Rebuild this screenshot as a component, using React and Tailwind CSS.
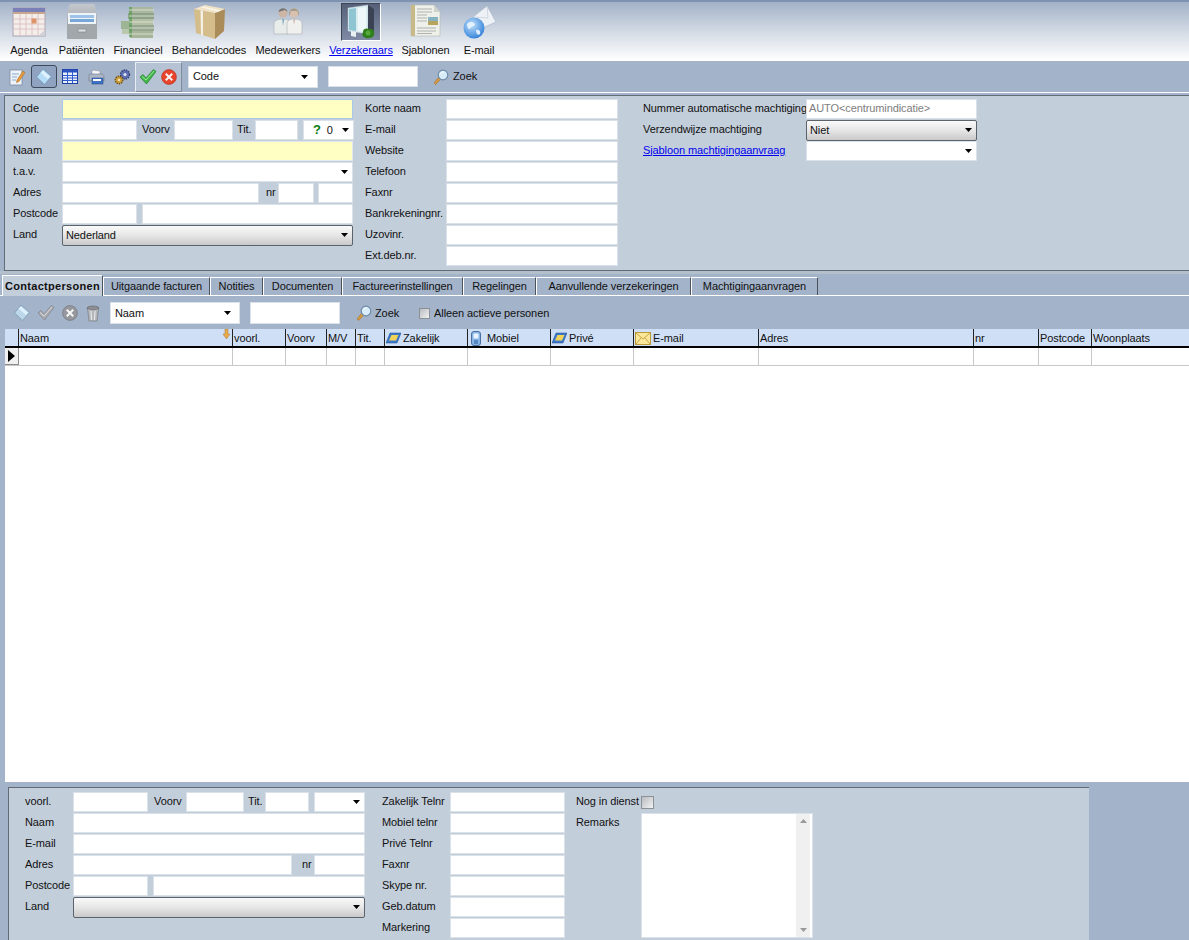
import React from "react";

const Arrow = ({ className = "" }) => (
  <svg width="7" height="4" viewBox="0 0 7 4" className={className}><path d="M0 0H7L3.5 4Z" fill="#000" /></svg>
);

const Label = ({ w, children, className = "" }) => (
  <span className={`shrink-0 whitespace-nowrap pb-[2px] ${w} ${className}`}>{children}</span>
);

const Input = ({ w, children, yellow, focus }) => (
  <div className={`h-[20px] shrink-0 border flex items-center px-[2px] pb-[1px] whitespace-nowrap overflow-hidden ${w} ${yellow ? "bg-[#ffffc4]" : "bg-white"} ${focus ? "border-[#a9c8ec]" : yellow ? "border-[#e3e8ee]" : "border-[#dbe1e8]"}`}>{children}</div>
);

const Combo = ({ w, children }) => (
  <div className={`h-[20px] shrink-0 border border-[#dbe1e8] bg-white flex items-center justify-between pl-[3px] pr-[4px] ${w}`}>
    <span className="flex items-center">{children}</span>
    <Arrow />
  </div>
);

const Drop = ({ w, children }) => (
  <div className={`h-[21px] shrink-0 rounded-[2px] border border-[#5d636b] bg-gradient-to-b from-[#fafafa] via-[#e6e6e6] to-[#c9c9c9] flex items-center justify-between pl-[3px] pr-[4px] ${w}`}>
    <span>{children}</span>
    <Arrow />
  </div>
);

const Row = ({ children }) => <div className="flex items-center h-[20px]">{children}</div>;

/* ---------- large navigation icons ---------- */
const IconAgenda = () => (
  <svg width="36" height="36" viewBox="0 0 36 36">
    <rect x="2" y="4" width="32" height="28" fill="#f4eeea" stroke="#aaa3b0" />
    <rect x="2" y="4" width="32" height="4" fill="#7c80b8" />
    <rect x="2" y="8" width="32" height="2" fill="#c8a78f" />
    <path d="M2 15H34M2 20H34M2 25H34M9 10V32M15 10V32M21 10V32M27 10V32" stroke="#d9b8bc" strokeWidth="0.8" />
    <rect x="20.5" y="14.5" width="5" height="5" fill="#dd9468" />
    <path d="M27 32L34 26V32Z" fill="#cfcfd6" />
  </svg>
);
const IconPatient = () => (
  <svg width="36" height="36" viewBox="0 0 36 36">
    <defs><linearGradient id="cab" x1="0" y1="0" x2="0" y2="1"><stop offset="0" stopColor="#c4c8cd" /><stop offset="1" stopColor="#8f9499" /></linearGradient></defs>
    <path d="M5 2Q5 0 8 0H28Q31 0 31 2L33 11V34Q33 35 31 35H5Q3 35 3 34V11Z" fill="url(#cab)" />
    <rect x="4" y="9" width="28" height="11" fill="#eef3f7" />
    <rect x="6" y="11" width="24" height="3" fill="#9fc3e8" />
    <rect x="6" y="15" width="24" height="3" fill="#78a6d6" />
    <rect x="3" y="20" width="30" height="15" rx="1" fill="#a2a7ac" />
    <rect x="14" y="25" width="8" height="3" fill="#d8dbde" stroke="#75797d" strokeWidth="0.5" />
  </svg>
);
const IconMoney = () => (
  <svg width="36" height="36" viewBox="0 0 36 36">
    <rect x="1" y="17" width="16" height="8" fill="#9db595" />
    <rect x="2" y="25" width="17" height="5" fill="#b9c7ad" />
    <rect x="9" y="3" width="24" height="6" fill="#aab79f" />
    <rect x="8" y="9" width="26" height="6" fill="#8fa38a" />
    <rect x="10" y="15" width="23" height="6" fill="#b4bfa6" />
    <rect x="9" y="21" width="25" height="6" fill="#95a78f" />
    <rect x="10" y="27" width="23" height="7" fill="#a8b59b" />
    <path d="M9 3H12V33H9Z" fill="#5d9a58" opacity=".7" />
    <path d="M9 6H34M9 12H34M9 18H34M9 24H34M9 30H34" stroke="#e4e8dc" strokeWidth="0.8" />
  </svg>
);
const IconBox = () => (
  <svg width="36" height="36" viewBox="0 0 36 36">
    <path d="M3 5L24 9V35L5 29Z" fill="#d5bd8b" />
    <path d="M24 9L34 5L33 27L24 35Z" fill="#a98c5a" />
    <path d="M3 5L14 1L34 5L24 9Z" fill="#f1e3c4" />
    <path d="M9 3L12 2.5L30 6.5L27 7.8Z" fill="#f8f5ec" />
    <path d="M9.5 6.2L12 6.7V31.5L10 30.9Z" fill="#f4f0e6" />
  </svg>
);
const IconDoctors = () => (
  <svg width="36" height="36" viewBox="0 0 36 36">
    <circle cx="13" cy="9" r="4.5" fill="#cdb6a6" />
    <path d="M8.5 8C9 3 17 3 17.5 8L15 6Z" fill="#777" />
    <path d="M4 30V20C4 16 9 15 13 15C17 15 19 16 19 20V30Z" fill="#e8eceb" stroke="#a9aeae" strokeWidth=".6" />
    <path d="M12 15L13 22L14.5 15Z" fill="#8fb1c4" />
    <circle cx="24" cy="9" r="4.5" fill="#d8c1ae" />
    <path d="M19 12C18 2 30 2 29 12L27 7H21Z" fill="#a79a84" />
    <path d="M17 30V20C17 16 21 15 24 15C28 15 32 16 32 20V30Z" fill="#f0f1ef" stroke="#a9aeae" strokeWidth=".6" />
    <path d="M23 15L24 21L25.5 15Z" fill="#d0bcb0" />
  </svg>
);
const IconInsurer = () => (
  <svg width="30" height="36" viewBox="0 0 30 36">
    <path d="M2 4L22 1V30L2 27Z" fill="#d9ecf0" stroke="#b8c6d0" strokeWidth=".5" />
    <path d="M3 5L10 4V27L3 26Z" fill="#8fc4d2" />
    <path d="M12 4L20 3V28L12 27Z" fill="#eef7f9" />
    <path d="M22 1L28 5V27L22 30Z" fill="#3a4254" />
    <path d="M5 27L5 32L10 33V28Z" fill="#eaf1f3" />
    <path d="M17 28C17 24 21 24 23 25C27 24 29 28 28 31C27 35 20 35 18 33C16 32 16 30 17 28Z" fill="#2f7f1c" />
    <circle cx="22" cy="29" r="2.5" fill="#58a93b" />
  </svg>
);
const IconPaper = () => (
  <svg width="36" height="36" viewBox="0 0 36 36">
    <path d="M3 1H26L32 8V32H3Z" fill="#eef0ea" stroke="#b7bbb4" strokeWidth=".6" />
    <rect x="3" y="1" width="4" height="31" fill="#c7ba88" />
    <path d="M9 5H24M9 8H24M9 11H19M9 14H19M9 17H19M9 24H28M9 27H28M9 29.5H24" stroke="#a8aca8" strokeWidth=".9" />
    <rect x="20" y="13" width="10" height="8" fill="#87b3c0" />
    <rect x="20" y="17" width="10" height="4" fill="#b8a55d" />
    <path d="M26 1V8H32Z" fill="#cfd2cc" />
  </svg>
);
const IconMail = () => (
  <svg width="36" height="36" viewBox="0 0 36 36">
    <defs><radialGradient id="glb" cx=".4" cy=".35" r=".7"><stop offset="0" stopColor="#bfe0fb" /><stop offset="1" stopColor="#2f7fd8" /></radialGradient></defs>
    <path d="M12 13L26 2L35 18L19 25Z" fill="#eef2f7" stroke="#a8b3c2" strokeWidth=".6" />
    <path d="M12 13L27 14L26 2" fill="none" stroke="#c3ccd8" strokeWidth=".7" />
    <circle cx="13" cy="24" r="10.5" fill="url(#glb)" />
    <path d="M6 20C9 17 12 18 14 20C13 23 10 22 9 25C7 25 6 23 6 20ZM15 26C18 25 20 27 19 30C17 32 15 30 15 26Z" fill="#eaf5ff" opacity=".9" />
  </svg>
);

/* ---------- small icons ---------- */
const Diamond = ({ gray }) => (
  <svg width="18" height="18" viewBox="0 0 18 18">
    <path d="M8 1L16.5 8.5L9.5 16.5L1.5 9Z" fill={gray ? "#bcd6ea" : "#b7dcf7"} stroke={gray ? "#7c9ab2" : "#6d95b8"} strokeWidth=".8" />
    <path d="M8 2.5L15 8.5L13 11L5.5 4.5Z" fill="#dff1fd" />
  </svg>
);
const Check = ({ gray }) => (
  <svg width="18" height="18" viewBox="0 0 18 18">
    <path d="M1 9L4 6.5L7 10L14.5 1.5L17 3.5L7.5 16Z" fill={gray ? "#a9abb0" : "#43b649"} stroke={gray ? "#808389" : "#1d7f2a"} strokeWidth=".7" />
    <path d="M3 8.5L7 12L15 3" stroke={gray ? "#dadbdd" : "#9be89b"} strokeWidth="1" fill="none" />
  </svg>
);
const Cancel = ({ gray }) => (
  <svg width="16" height="16" viewBox="0 0 16 16">
    <circle cx="8" cy="8" r="7.4" fill={gray ? "#96989d" : "#e8452c"} stroke={gray ? "#6f7177" : "#b32c1a"} strokeWidth=".6" />
    <path d="M4.8 4.8L11.2 11.2M11.2 4.8L4.8 11.2" stroke="#f6f6f6" strokeWidth="2" />
  </svg>
);
const Magnifier = () => (
  <svg width="16" height="16" viewBox="0 0 16 16">
    <path d="M1 14L2.5 15.5L7.5 10.5L5.5 8.5Z" fill="#d89a3c" stroke="#96672a" strokeWidth=".5" />
    <circle cx="10" cy="6" r="4.8" fill="#d8ecfa" stroke="#6d8aa8" strokeWidth="1.2" />
    <path d="M7.5 5C8 3.8 9 3 10.5 3" stroke="#fff" strokeWidth="1" fill="none" />
  </svg>
);
const Note = () => (
  <svg width="18" height="18" viewBox="0 0 18 18">
    <rect x="2" y="2" width="12" height="15" fill="#eef3f8" stroke="#7b8da3" strokeWidth=".8" />
    <path d="M4 6H11M4 9H9M4 12H8" stroke="#7aa0c8" strokeWidth=".9" />
    <path d="M9 12L15 3L17 4.5L11 13.5L8.5 14.5Z" fill="#e79c3c" stroke="#9b5f1d" strokeWidth=".5" />
  </svg>
);
const TableIcon = () => (
  <svg width="16" height="15" viewBox="0 0 16 15">
    <rect x=".5" y=".5" width="15" height="14" fill="#e9f0fb" stroke="#1f3f9e" />
    <rect x=".5" y=".5" width="15" height="3" fill="#2a52c0" />
    <path d="M1 6.5H15M1 9H15M1 11.5H15M5.5 3V14M10.5 3V14" stroke="#2e5bd0" />
  </svg>
);
const Printer = () => (
  <svg width="17" height="16" viewBox="0 0 17 16">
    <path d="M4 1L12 2V6H4Z" fill="#f5f5f8" stroke="#8b93a3" strokeWidth=".6" />
    <path d="M1 6C1 5 3 5 4 5H13C15 5 16 6 16 8V12H1Z" fill="#aeb7c7" stroke="#6f7888" strokeWidth=".6" />
    <rect x="4" y="9" width="11" height="6" fill="#3f72c4" stroke="#23447e" strokeWidth=".5" />
    <rect x="5" y="10" width="8" height="2" fill="#fff" />
  </svg>
);
const Gears = () => (
  <svg width="18" height="18" viewBox="0 0 18 18">
    <circle cx="12" cy="6.5" r="4.5" fill="#5d6fb0" stroke="#333f78" strokeDasharray="1.4 1" strokeWidth="1.4" />
    <circle cx="12" cy="6.5" r="1.6" fill="#dfe4f2" />
    <circle cx="6" cy="12" r="3.8" fill="#c79a3a" stroke="#6d5015" strokeDasharray="1.3 1" strokeWidth="1.4" />
    <circle cx="6" cy="12" r="1.3" fill="#f3e3b5" />
  </svg>
);
const Trash = () => (
  <svg width="14" height="17" viewBox="0 0 14 17">
    <ellipse cx="7" cy="3" rx="6" ry="2" fill="#8d8f93" stroke="#55575b" strokeWidth=".5" />
    <path d="M1.5 3.5L3 16H11L12.5 3.5C10 5 4 5 1.5 3.5Z" fill="#b4b6ba" stroke="#66686c" strokeWidth=".5" />
    <path d="M5 6L5.5 15M9 6L8.5 15" stroke="#f0f0f0" strokeWidth="1" />
  </svg>
);
const PhoneBook = () => (
  <svg width="15" height="12" viewBox="0 0 15 12">
    <path d="M4 1H15L11 11H0Z" fill="#3b78c8" stroke="#1d4a8c" strokeWidth=".5" />
    <path d="M5.5 3H12.5L10 8.5H3Z" fill="#f2d35a" />
  </svg>
);
const Mobile = () => (
  <svg width="10" height="15" viewBox="0 0 10 15" className="ml-[2px] mr-[4px]">
    <rect x=".5" y=".5" width="9" height="14" rx="2.5" fill="#87b5e6" stroke="#4d6f9e" />
    <rect x="2.5" y="2.5" width="5" height="5" fill="#e8f3ff" />
    <path d="M3 10H7M3 12H7" stroke="#2c5d9c" />
  </svg>
);
const Envelope = () => (
  <svg width="16" height="13" viewBox="0 0 16 13">
    <rect x=".5" y=".5" width="15" height="12" fill="#fbe79a" stroke="#b99a3b" />
    <path d="M1 1L8 7L15 1M1 12L6 6M15 12L10 6" stroke="#c9a543" fill="none" />
  </svg>
);
const SortDown = () => (
  <svg width="7" height="10" viewBox="0 0 7 10">
    <path d="M2 0H5V5H7L3.5 10L0 5H2Z" fill="#e9a94b" stroke="#a87a2c" strokeWidth=".5" />
  </svg>
);

const NavItem = ({ w, label, icon, active }) => (
  <div className={`flex flex-col items-center shrink-0 ${w}`}>
    <div className={`h-[38px] flex items-center justify-center mt-[3px] ${active ? "w-[40px] bg-gradient-to-b from-[#566179] to-[#7f8aa4] border border-[#3d4553] border-b-white border-r-white" : ""}`}>{icon}</div>
    <span className={`mt-[2px] leading-[14px] whitespace-nowrap ${active ? "text-[#0000ee] underline" : ""}`}>{label}</span>
  </div>
);

const Tab = ({ w, children, active }) => (
  <div className={`flex items-center justify-center shrink-0 border-l border-t border-r whitespace-nowrap border-l-white border-t-white border-r-[#4c525c] ${active ? "h-[21px] font-bold tracking-[0.3px] bg-[#c3cedb] -mb-[1px] relative" : "h-[18px] bg-[#a3b3c9]"} ${w}`}>{children}</div>
);

const Cell = ({ w, children, className = "" }) => (
  <div className={`shrink-0 h-full flex items-center pl-[1px] pt-[1px] gap-[2px] overflow-hidden whitespace-nowrap ${w} ${className}`}>{children}</div>
);

const columns = [
  ["w-[214px]", "Naam"],
  ["w-[53px]", "voorl."],
  ["w-[41px]", "Voorv"],
  ["w-[29px]", "M/V"],
  ["w-[29px]", "Tit."],
  ["w-[83px]", "Zakelijk", <PhoneBook key="a" />],
  ["w-[83px]", "Mobiel", <Mobile key="b" />],
  ["w-[83px]", "Privé", <PhoneBook key="c" />],
  ["w-[125px]", "E-mail", <Envelope key="d" />],
  ["w-[215px]", "Adres"],
  ["w-[65px]", "nr"],
  ["w-[53px]", "Postcode"],
  ["w-[97px]", "Woonplaats"],
];

export default function App() {
  return (
    <div className="w-[1189px] h-[940px] overflow-hidden flex flex-col bg-[#a3b3c9] text-[11px] tracking-[-0.1px] text-[#111] font-['Liberation_Sans',Arial,sans-serif]">
      {/* Navigation */}
      <div className="h-[61px] shrink-0 flex pl-[4px] border-t-2 border-[#7d93b0] bg-gradient-to-b from-[#a3b2c8] via-[#dce2ea] via-60% to-white">
        <div className="flex -mt-[2px]">
          <NavItem w="w-[50px]" label="Agenda" icon={<IconAgenda />} />
          <NavItem w="w-[55px]" label="Patiënten" icon={<IconPatient />} />
          <NavItem w="w-[58px]" label="Financieel" icon={<IconMoney />} />
          <NavItem w="w-[84px]" label="Behandelcodes" icon={<IconBox />} />
          <NavItem w="w-[74px]" label="Medewerkers" icon={<IconDoctors />} />
          <NavItem w="w-[72px]" label="Verzekeraars" icon={<IconInsurer />} active />
          <NavItem w="w-[57px]" label="Sjablonen" icon={<IconPaper />} />
          <NavItem w="w-[50px]" label="E-mail" icon={<IconMail />} />
        </div>
      </div>

      {/* Toolbar */}
      <div className="h-[32px] shrink-0 flex items-center pl-[8px] bg-[#a3b3c9] border-b border-white">
        <div className="w-[18px] flex justify-center"><Note /></div>
        <div className="ml-[5px] w-[26px] h-[23px] flex items-center justify-center rounded-[3px] border border-[#3e4a5c] bg-[#8fa3c0]"><Diamond /></div>
        <div className="ml-[5px] w-[16px] flex justify-center"><TableIcon /></div>
        <div className="ml-[10px] w-[17px] flex justify-center"><Printer /></div>
        <div className="ml-[8px] w-[18px] flex justify-center"><Gears /></div>
        <div className="ml-[4px] w-[47px] h-[30px] flex items-center gap-[4px] pl-[3px] bg-[#b6c3d4] border border-[#e8edf3] border-r-[#7f8b9b] border-b-[#7f8b9b]">
          <Check /><Cancel />
        </div>
        <div className="ml-[6px] w-[130px] h-[22px] bg-white border border-[#dbe1e8] flex items-center justify-between pl-[4px] pr-[9px]">
          <span>Code</span><Arrow />
        </div>
        <div className="ml-[10px] w-[90px] h-[21px] bg-white border border-[#dbe1e8]" />
        <div className="ml-[15px] flex items-center gap-[4px]"><Magnifier /><span>Zoek</span></div>
      </div>

      {/* Upper form */}
      <div className="h-[176px] shrink-0 mt-[2px] ml-[4px] border-t border-l border-b border-[#636b76] bg-[#c3cedb] flex pt-[3px] pl-[8px]">
        <div className="flex flex-col gap-[1px] w-[340px] shrink-0">
          <Row><Label w="w-[49px]">Code</Label><Input w="w-[291px]" yellow focus /></Row>
          <Row>
            <Label w="w-[49px]">voorl.</Label><Input w="w-[75px]" />
            <Label w="w-[32px] ml-[5px]">Voorv</Label><Input w="w-[59px]" />
            <Label w="w-[18px] ml-[4px]">Tit.</Label><Input w="w-[43px]" />
            <div className="ml-[5px]">
              <Combo w="w-[51px]"><span className="ml-[6px] font-bold text-[13px] text-[#0a7a0a]">?</span><span className="ml-[6px]">0</span></Combo>
            </div>
          </Row>
          <Row><Label w="w-[49px]">Naam</Label><Input w="w-[291px]" yellow /></Row>
          <Row><Label w="w-[49px]">t.a.v.</Label><Combo w="w-[291px]" /></Row>
          <Row>
            <Label w="w-[49px]">Adres</Label><Input w="w-[197px]" />
            <Label w="w-[12px] ml-[7px]">nr</Label><Input w="w-[36px]" />
            <div className="ml-[4px]"><Input w="w-[35px]" /></div>
          </Row>
          <Row>
            <Label w="w-[49px]">Postcode</Label><Input w="w-[75px]" />
            <div className="ml-[5px]"><Input w="w-[211px]" /></div>
          </Row>
          <Row><Label w="w-[49px]">Land</Label><Drop w="w-[291px]">Nederland</Drop></Row>
        </div>

        <div className="ml-[12px] flex flex-col gap-[1px] shrink-0">
          {["Korte naam", "E-mail", "Website", "Telefoon", "Faxnr", "Bankrekeningnr.", "Uzovinr.", "Ext.deb.nr."].map((t) => (
            <Row key={t}><Label w="w-[81px]">{t}</Label><Input w="w-[172px]" /></Row>
          ))}
        </div>

        <div className="ml-[25px] flex flex-col gap-[1px] shrink-0">
          <Row>
            <Label w="w-[163px]">Nummer automatische machtiging</Label>
            <Input w="w-[171px]"><span className="text-[#808080]">AUTO&lt;centrumindicatie&gt;</span></Input>
          </Row>
          <Row><Label w="w-[163px]">Verzendwijze machtiging</Label><Drop w="w-[171px]">Niet</Drop></Row>
          <Row>
            <Label w="w-[163px]" className="text-[#0000ee] underline">Sjabloon machtigingaanvraag</Label>
            <Combo w="w-[171px]" />
          </Row>
        </div>
      </div>

      {/* Tabs */}
      <div className="h-[3px] shrink-0 bg-[#b4bfcc]" />
      <div className="h-[22px] shrink-0 flex items-end pl-[2px] border-b border-white bg-[#a3b3c9]">
        <Tab w="w-[101px]" active>Contactpersonen</Tab>
        <Tab w="w-[107px]">Uitgaande facturen</Tab>
        <Tab w="w-[53px]">Notities</Tab>
        <Tab w="w-[79px]">Documenten</Tab>
        <Tab w="w-[121px]">Factureerinstellingen</Tab>
        <Tab w="w-[73px]">Regelingen</Tab>
        <Tab w="w-[155px]">Aanvullende verzekeringen</Tab>
        <Tab w="w-[127px]">Machtigingaanvragen</Tab>
      </div>

      {/* Contact toolbar */}
      <div className="h-[33px] shrink-0 flex items-center pl-[13px] pt-[1px]">
        <Diamond gray />
        <div className="ml-[6px]"><Check gray /></div>
        <div className="ml-[7px]"><Cancel gray /></div>
        <div className="ml-[8px]"><Trash /></div>
        <div className="ml-[10px] w-[130px] h-[22px] bg-white border border-[#dbe1e8] flex items-center justify-between pl-[4px] pr-[8px]">
          <span>Naam</span><Arrow />
        </div>
        <div className="ml-[10px] w-[90px] h-[22px] bg-white border border-[#dbe1e8]" />
        <div className="ml-[16px] flex items-center gap-[3px]"><Magnifier /><span>Zoek</span></div>
        <div className="ml-[20px] w-[11px] h-[11px] border border-[#8b8f96] bg-gradient-to-br from-[#b9bcc1] to-[#f2f2f2]" />
        <span className="ml-[4px]">Alleen actieve personen</span>
      </div>

      {/* Grid */}
      <div className="h-[453px] shrink-0 ml-[5px] bg-white flex flex-col">
        <div className="h-[19px] shrink-0 flex bg-[#cfe0f6] border-b-2 border-black">
          <div className="w-[14px] shrink-0 border-r border-[#222]" />
          {columns.map(([w, t, ic], i) => (
            <Cell key={t} w={w} className={`relative ${i < columns.length - 1 ? "border-r border-[#222]" : ""}`}>
              {ic}<span>{t}</span>
              {i === 0 && <span className="absolute right-[2px] top-0"><SortDown /></span>}
            </Cell>
          ))}
        </div>
        <div className="h-[18px] shrink-0 flex border-b border-[#c8c8c8]">
          <div className="w-[14px] shrink-0 flex items-center justify-center bg-[#f0f0f0] border-r border-b border-[#8a8a8a]">
            <svg width="7" height="12" viewBox="0 0 7 12"><path d="M0 0L7 6L0 12Z" fill="#000" /></svg>
          </div>
          {columns.map(([w], i) => (
            <div key={i} className={`shrink-0 ${w} ${i < columns.length - 1 ? "border-r border-[#c8c8c8]" : ""}`} />
          ))}
        </div>
      </div>

      {/* Lower form */}
      <div className="h-[5px] shrink-0" />
      <div className="flex-1 ml-[8px] w-[1081px] border-t border-l border-[#636b76] bg-[#c3cedb] flex pt-[4px] pl-[16px]">
        <div className="flex flex-col gap-[1px] shrink-0">
          <Row>
            <Label w="w-[48px]">voorl.</Label><Input w="w-[75px]" />
            <Label w="w-[32px] ml-[6px]">Voorv</Label><Input w="w-[58px]" />
            <Label w="w-[17px] ml-[4px]">Tit.</Label><Input w="w-[44px]" />
            <div className="ml-[5px]"><Combo w="w-[51px]" /></div>
          </Row>
          <Row><Label w="w-[48px]">Naam</Label><Input w="w-[292px]" /></Row>
          <Row><Label w="w-[48px]">E-mail</Label><Input w="w-[292px]" /></Row>
          <Row>
            <Label w="w-[48px]">Adres</Label><Input w="w-[219px]" />
            <Label w="w-[12px] ml-[10px]">nr</Label><Input w="w-[51px]" />
          </Row>
          <Row>
            <Label w="w-[48px]">Postcode</Label><Input w="w-[75px]" />
            <div className="ml-[5px]"><Input w="w-[212px]" /></div>
          </Row>
          <Row><Label w="w-[48px]">Land</Label><Drop w="w-[292px]" /></Row>
        </div>

        <div className="ml-[17px] flex flex-col gap-[1px] shrink-0">
          {["Zakelijk Telnr", "Mobiel telnr", "Privé Telnr", "Faxnr", "Skype nr.", "Geb.datum", "Markering"].map((t) => (
            <Row key={t}><Label w="w-[68px]">{t}</Label><Input w="w-[115px]" /></Row>
          ))}
        </div>

        <div className="ml-[11px] flex flex-col gap-[1px] shrink-0">
          <Row>
            <Label w="w-[65px]">Nog in dienst</Label>
            <div className="w-[13px] h-[13px] border border-[#8b8f96] bg-gradient-to-br from-[#b9bcc1] to-[#f2f2f2]" />
          </Row>
          <div className="flex items-start">
            <Label w="w-[65px]" className="mt-[1px]">Remarks</Label>
            <div className="w-[172px] h-[125px] bg-white border border-[#dbe1e8] flex justify-end pr-[2px]">
              <div className="w-[14px] h-full bg-[#f0f0f0] flex flex-col items-center justify-between py-[5px]">
                <svg width="7" height="4" viewBox="0 0 7 4"><path d="M0 4L3.5 0L7 4Z" fill="#9a9a9a" /></svg>
                <svg width="7" height="4" viewBox="0 0 7 4"><path d="M0 0H7L3.5 4Z" fill="#9a9a9a" /></svg>
              </div>
            </div>
          </div>
        </div>
      </div>
    </div>
  );
}
